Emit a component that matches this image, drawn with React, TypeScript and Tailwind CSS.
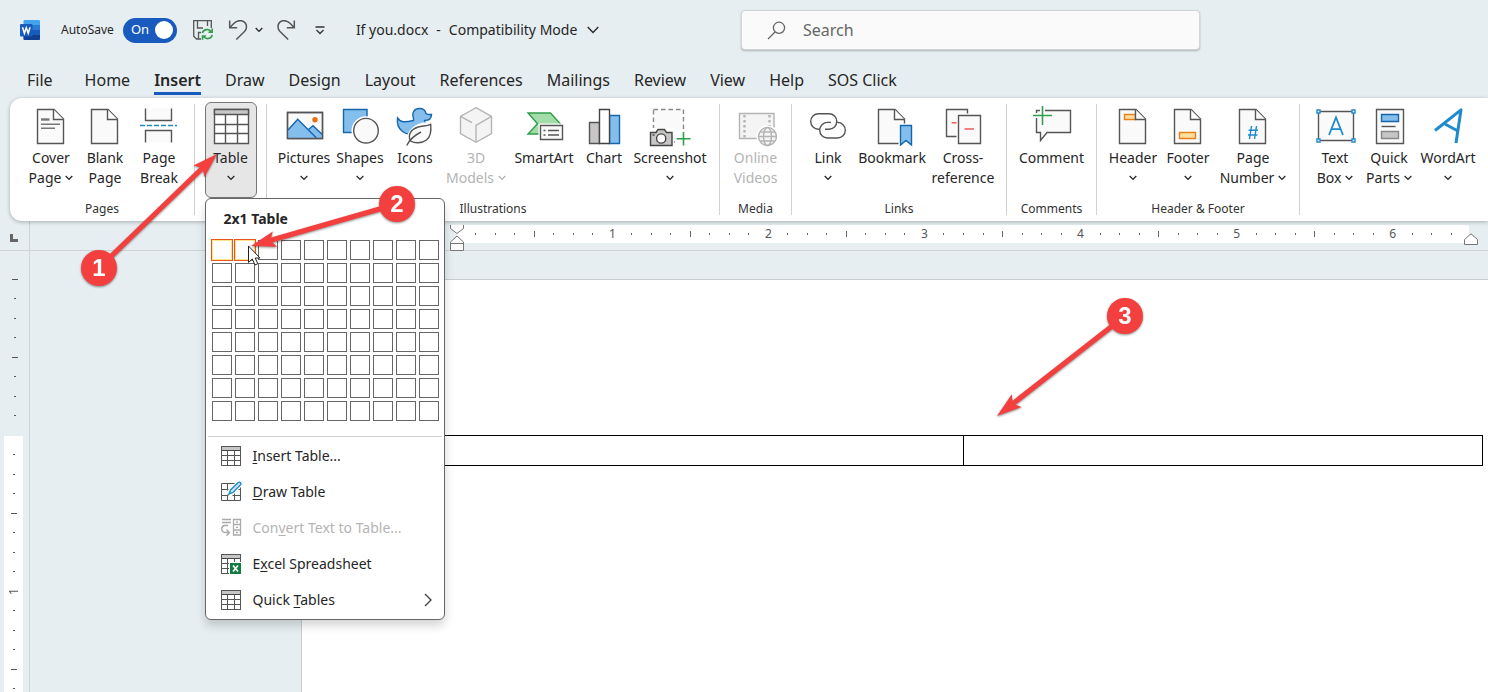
import { type ReactNode, useState } from "react";
import clsx from "clsx";

const TABS = ["File", "Home", "Insert", "Draw", "Design", "Layout", "References", "Mailings", "Review", "View", "Help", "SOS Click"];

const PAGE_PATH = "M6.5 5.5H23L32.5 15V39.5H6.5Z";
const FOLD_PATH = "M22.5 5.5V15.5H32.5";

function Chevron({ className = "" }: { className?: string }) {
  return (
    <svg viewBox="0 0 8 6" className={clsx("inline-block h-1.5 w-2 shrink-0", className)} fill="none" stroke="currentColor" strokeWidth="1.3">
      <path d="M0.7 1 4 4.4 7.3 1" />
    </svg>
  );
}

function Icon({ children }: { children: ReactNode }) {
  return (
    <svg viewBox="0 0 40 44" className="h-11 w-10 shrink-0 overflow-visible" fill="none" stroke="#555" strokeWidth="1.4">
      {children}
    </svg>
  );
}

function Sheet({ children }: { children?: ReactNode }) {
  return (
    <Icon>
      <path d={PAGE_PATH} fill="#fafafa" />
      {children}
      <path d={FOLD_PATH} fill="#fff" />
    </Icon>
  );
}

const icons = {
  cover: (
    <Sheet>
      <path d="M10 15.5h8.5" stroke="#777" strokeWidth="2.4" />
      <path d="M10 20.3h19M10 24.3h14" stroke="#777" />
    </Sheet>
  ),
  blank: <Sheet />,
  pageBreak: (
    <Icon>
      <path d="M6.5 4.5V16.5H32.5V4.5M6.5 38.5V26.5H32.5V38.5" fill="#fafafa" />
      <path d="M1 21.5H38" stroke="#1e8bcd" strokeWidth="1.6" strokeDasharray="5 2" />
    </Icon>
  ),
  table: (
    <Icon>
      <path d="M3.5 5.5H37.5V39.5H3.5Z" fill="#fff" />
      <path d="M3.5 5.5H37.5V10.5H3.5Z" fill="#c8c6c8" />
      <path d="M14.5 10.5V39.5M26.5 10.5V39.5M3.5 20.5H37.5M3.5 29.5H37.5" />
    </Icon>
  ),
  pictures: (
    <Icon>
      <path d="M3.5 8.5H38.5V34.5H3.5Z" fill="#fafafa" />
      <path d="M4 26 13.7 15.2 32.5 34H4Z" fill="#83beec" stroke="none" />
      <path d="M24.5 25.5 29 21.7 38 30.3V34H33Z" fill="#83beec" stroke="none" />
      <path d="M4 26 13.7 15.2 32.5 34M24.5 25.5 29 21.7 38 30.3" stroke="#1566ad" />
      <path d="M3.5 8.5H38.5V34.5H3.5Z" />
      <circle cx="31" cy="15.7" r="2.7" fill="#e8710c" stroke="none" />
    </Icon>
  ),
  shapes: (
    <Icon>
      <path d="M3.5 5.5H27V28.5H3.5Z" fill="#83beec" stroke="#1566ad" />
      <circle cx="26" cy="26.7" r="14.5" fill="#fff" stroke="none" />
      <circle cx="26" cy="26.7" r="12.3" fill="#fafafa" />
    </Icon>
  ),
  icons: (
    <Icon>
      <path
        d="M18.5 14.5C16.5 8 19.5 4.5 24.5 4.5C28 4.5 30.5 6.5 31 9.5C33 11 35 10.5 36.5 10.5C36.5 14.5 34 16.5 29.5 16.5C29 19 34 20 34 25C34 31 27 31 20 31C10 31 1 26 2.5 14C5.5 18.5 9.5 18.5 18.5 16.5Z"
        fill="#83beec"
        stroke="#1566ad"
      />
      <path d="M11.5 42C13 35 15 26 24 22C29 20 33 21 36 20C36.5 27 36 32 32 36C28 40 20 40 15.5 37Z" fill="#fafafa" stroke="#fff" strokeWidth="4.5" />
      <path d="M15.5 37C12 30 17 25 23 23C28 21.5 31 22.5 35.7 20.3C36.5 28 35.5 33 31.5 36C27 39.5 19.5 39.5 15.5 37Z" fill="#fafafa" />
      <path d="M11.7 41.5C14.5 36 19 31.5 26 28" />
    </Icon>
  ),
  models: (
    <Icon>
      <path d="M20 3.7 35.5 12.3V29.7L20 38.3 4.5 29.7V12.3Z" fill="#f4f4f4" stroke="#b4b4b4" />
      <path d="M4.5 12.3 16 18.7M20 38.3V21.3L35.5 12.3" stroke="#b4b4b4" />
    </Icon>
  ),
  smartArt: (
    <Icon>
      <path d="M4 9H26.5L36.5 20 28 30H4L13.5 19.7Z" fill="#a3dba9" stroke="#2f9d4a" />
      <path d="M14.5 19.5H40V37.5H14.5Z" fill="#fff" stroke="none" />
      <path d="M16.5 21.5H38.5V35.5H16.5Z" fill="#fafafa" />
      <path d="M19.5 26.5h2M24 26.5h11M19.5 31h2M24 31h11" />
    </Icon>
  ),
  chart: (
    <Icon>
      <path d="M5.5 18.5H15.5V39.5H5.5Z" fill="#c8c6c4" />
      <path d="M25.5 11.5H35.5V39.5H25.5Z" fill="#83beec" stroke="#1566ad" />
      <path d="M15.5 5.5H25.5V39.5H15.5Z" fill="#fff" stroke="#444" />
    </Icon>
  ),
  screenshot: (
    <Icon>
      <path d="M3.5 5.5H33.5V38H3.5Z" fill="#fafafa" stroke="#8a8a8a" strokeDasharray="4.5 3" />
      <path d="M-1 24H24V43H-1Z" fill="#fff" stroke="none" />
      <path d="M25 26H42V43H25Z" fill="#fff" stroke="none" />
      <path d="M.5 28.5H6L8 25.5H14.5L16.5 28.5H22V41.5H.5Z" fill="#c8c6c4" stroke="#444" />
      <circle cx="11.2" cy="34.5" r="4.6" fill="#fff" stroke="#444" />
      <path d="M2.5 31h2" stroke="#444" />
      <path d="M33.5 28V41.5M26.5 34.7H40.5" stroke="#2f9d4a" strokeWidth="1.6" />
    </Icon>
  ),
  video: (
    <Icon>
      <path d="M3.5 9.5H38V34.5H3.5Z" fill="#f4f4f4" stroke="#b4b4b4" />
      <path d="M8.5 11V34M33.5 11V22" stroke="#b4b4b4" strokeWidth="2.4" strokeDasharray="2.5 2.5" />
      <circle cx="31.5" cy="32.5" r="11" fill="#fff" stroke="none" />
      <g stroke="#b4b4b4">
        <circle cx="31.5" cy="32.5" r="9" fill="#f4f4f4" />
        <ellipse cx="31.5" cy="32.5" rx="4" ry="9" />
        <path d="M22.5 32.5H40.5M24 28H39M24 37H39" />
      </g>
    </Icon>
  ),
  link: (
    <Icon>
      <path d="M12 25.3H10.5A7.8 7.8 0 0 1 10.5 9.7H21A7.8 7.8 0 0 1 21 25.3H17" />
      <path d="M23 18.4H19.5A7.8 7.8 0 0 0 19.5 34H29.5A7.8 7.8 0 0 0 29.5 18.4H28.5" />
    </Icon>
  ),
  bookmark: (
    <Sheet>
      <path d="M26.5 19.5H42V44H26.5Z" fill="#fff" stroke="none" />
      <path d="M28.5 21.5H39.5V41L34 36.5 28.5 41Z" fill="#83beec" stroke="#1566ad" />
    </Sheet>
  ),
  cross: (
    <Icon>
      <path d="M3.5 5.5H24.5V32.5H3.5Z" fill="#fafafa" />
      <path d="M8.7 18.8H14" stroke="#f05050" />
      <path d="M13.5 9.5H39.5V41H13.5Z" fill="#fff" stroke="none" />
      <path d="M15.5 11.5H37.5V39.5H15.5Z" fill="#fafafa" />
      <path d="M21.5 25H31" stroke="#f05050" />
    </Icon>
  ),
  comment: (
    <Icon>
      <path d="M4.5 6.5H38.5V28.5H15L8.5 36.5V28.5H4.5Z" fill="#fafafa" />
      <path d="M10.5 2V21M1 11.5H20" stroke="#fff" strokeWidth="5" />
      <path d="M10.5 2V21M1 11.5H20" stroke="#2f9d4a" strokeWidth="1.6" />
    </Icon>
  ),
  header: (
    <Sheet>
      <path d="M11.5 10.5H22.5V15.5H11.5Z" fill="#ffdf9e" stroke="#e8811c" />
    </Sheet>
  ),
  footer: (
    <Sheet>
      <path d="M11.5 28.5H27.5V34.5H11.5Z" fill="#ffdf9e" stroke="#e8811c" />
    </Sheet>
  ),
  pageNumber: (
    <Sheet>
      <path d="M18.5 22 16.5 35M23.5 22 21.5 35M15.5 26.3H25M15 31H24.5" stroke="#1e8bcd" />
    </Sheet>
  ),
  textBox: (
    <Icon>
      <path d="M3.5 7.5H38.5V36.5H3.5Z" fill="#fafafa" />
      <path d="M14 31 21 13.5 28 31M16.3 25.2H25.7" stroke="#1e8bcd" strokeWidth="1.8" />
      <path d="M2 6h3v3h-3zM37 6h3v3h-3zM2 35h3v3h-3zM37 35h3v3h-3z" fill="#fff" stroke="#1e8bcd" />
    </Icon>
  ),
  quickParts: (
    <Icon>
      <path d="M7.5 5.5H34.5V39.5H7.5Z" fill="#fafafa" />
      <path d="M12.5 10.5H29.5V17.5H12.5Z" fill="#83beec" stroke="#1566ad" />
      <path d="M12.5 22.5H26.5" />
      <path d="M12.5 27.5H29.5V34.5H12.5Z" fill="#c8c6c4" stroke="#888" />
    </Icon>
  ),
  wordArt: (
    <Icon>
      <path d="M7 26.5 33 5.8 28 39M16 19.5 29 26.5" stroke="#1e8bcd" strokeWidth="3" strokeLinejoin="round" />
    </Icon>
  ),
};

interface Tool {
  icon: keyof typeof icons;
  lines: string[];
  width: string;
  menu?: boolean;
  disabled?: boolean;
}

const PAGES: Tool[] = [
  { icon: "cover", lines: ["Cover", "Page"], width: "w-[54px]", menu: true },
  { icon: "blank", lines: ["Blank", "Page"], width: "w-[54px]" },
  { icon: "pageBreak", lines: ["Page", "Break"], width: "w-[54px]" },
];

const GROUPS: { name: string; width: string; tools: Tool[] }[] = [
  {
    name: "Illustrations",
    width: "w-[453px]",
    tools: [
      { icon: "pictures", lines: ["Pictures"], width: "w-14", menu: true },
      { icon: "shapes", lines: ["Shapes"], width: "w-14", menu: true },
      { icon: "icons", lines: ["Icons"], width: "w-[54px]" },
      { icon: "models", lines: ["3D", "Models"], width: "w-[68px]", menu: true, disabled: true },
      { icon: "smartArt", lines: ["SmartArt"], width: "w-[68px]" },
      { icon: "chart", lines: ["Chart"], width: "w-[52px]" },
      { icon: "screenshot", lines: ["Screenshot"], width: "w-20", menu: true },
    ],
  },
  { name: "Media", width: "w-[72px]", tools: [{ icon: "video", lines: ["Online", "Videos"], width: "w-16", disabled: true }] },
  {
    name: "Links",
    width: "w-[215px]",
    tools: [
      { icon: "link", lines: ["Link"], width: "w-14", menu: true },
      { icon: "bookmark", lines: ["Bookmark"], width: "w-[72px]" },
      { icon: "cross", lines: ["Cross-", "reference"], width: "w-[70px]" },
    ],
  },
  { name: "Comments", width: "w-[90px]", tools: [{ icon: "comment", lines: ["Comment"], width: "w-[72px]" }] },
  {
    name: "Header & Footer",
    width: "w-[203px]",
    tools: [
      { icon: "header", lines: ["Header"], width: "w-14", menu: true },
      { icon: "footer", lines: ["Footer"], width: "w-[54px]", menu: true },
      { icon: "pageNumber", lines: ["Page", "Number"], width: "w-[76px]", menu: true },
    ],
  },
];

const TEXT_TOOLS: Tool[] = [
  { icon: "textBox", lines: ["Text", "Box"], width: "w-[54px]", menu: true },
  { icon: "quickParts", lines: ["Quick", "Parts"], width: "w-[54px]", menu: true },
  { icon: "wordArt", lines: ["WordArt"], width: "w-16", menu: true },
];

function ToolButton({ tool }: { tool: Tool }) {
  const [first, second] = tool.lines;
  return (
    <button
      type="button"
      disabled={tool.disabled}
      className={clsx("flex shrink-0 flex-col items-center pt-1.5 text-sm leading-5 whitespace-nowrap", tool.width, tool.disabled ? "text-[#b4b4b4]" : "text-[#262626]")}
    >
      {icons[tool.icon]}
      <span>{first}</span>
      <span className="flex h-5 items-center gap-1">
        {second}
        {tool.menu ? <Chevron /> : null}
      </span>
    </button>
  );
}

function Group({ name, width, children }: { name?: string; width: string; children: ReactNode }) {
  return (
    <div className={clsx("flex shrink-0 py-1.5", width)}>
      <div className="-my-1.5 flex flex-1 flex-col justify-between pb-1">
        <div className="flex justify-center">{children}</div>
        <div className="text-center text-xs leading-4 text-[#333]">{name}</div>
      </div>
      <div className="w-px bg-[#d0d0d0]" />
    </div>
  );
}

function GridGlyph({ children }: { children?: ReactNode }) {
  return (
    <svg viewBox="0 0 20 20" className="size-5 shrink-0 overflow-visible" fill="none" stroke="#555">
      <path d="M.5 .5H19.5V19.5H.5Z" fill="#fff" />
      <path d="M.5 .5H19.5V4.5H.5Z" fill="#c8c6c4" stroke="#444" />
      <path d="M6.5 4.5V19.5M13.5 4.5V19.5M.5 9.5H19.5M.5 14.5H19.5" />
      <path d="M.5 .5H19.5V19.5H.5Z" />
      {children}
    </svg>
  );
}

const MENU_ITEMS: { before: string; key: string; after: string; icon: ReactNode; disabled?: boolean; submenu?: boolean }[] = [
  { before: "", key: "I", after: "nsert Table...", icon: <GridGlyph /> },
  {
    before: "",
    key: "D",
    after: "raw Table",
    icon: (
      <svg viewBox="0 0 20 20" className="size-5 shrink-0 overflow-visible" fill="none" stroke="#555">
        <path d="M.5 1.5H19.5V18.5H.5ZM6.5 1.5V18.5M13.5 1.5V18.5M.5 7.5H19.5M.5 13.5H19.5" fill="#fafafa" />
        <path d="M7 13 19 1" stroke="#fff" strokeWidth="7" />
        <path d="M8 12 9.5 8 17 .8Q18.5 -.5 19.5 .8T19.3 3L12 10.5Z" fill="#cfe6f7" stroke="#1e8bcd" strokeWidth="1.4" />
      </svg>
    ),
  },
  {
    before: "Con",
    key: "v",
    after: "ert Text to Table...",
    disabled: true,
    icon: (
      <svg viewBox="0 0 20 20" className="size-5 shrink-0 overflow-visible" fill="none" stroke="#aaa" strokeWidth="1.3">
        <path d="M1 1.5H10M1 4.5H10M7 7.5H3.5Q.7 8 .7 11T4 14.5H8M5.5 11.5 8.5 14.5 5.5 17.8" />
        <path d="M12.5 1.5H19.5V17H12.5ZM12.5 6.5H19.5M12.5 12H19.5M15 4H17M15 9.3H17M15 14.5H17" />
      </svg>
    ),
  },
  {
    before: "E",
    key: "x",
    after: "cel Spreadsheet",
    icon: (
      <GridGlyph>
        <path d="M8 8H21V21H8Z" fill="#fff" stroke="none" />
        <path d="M9 9H20V20H9Z" fill="#107c41" stroke="none" />
        <path d="M12 11.5 17 17.5M17 11.5 12 17.5" stroke="#fff" strokeWidth="1.7" />
      </GridGlyph>
    ),
  },
  { before: "Quick ", key: "T", after: "ables", icon: <GridGlyph />, submenu: true },
];

const GRID_CELLS = Array.from({ length: 80 }, (_, i) => ({ col: i % 10, row: Math.floor(i / 10) }));

function TableMenu() {
  return (
    <div role="menu" className="absolute top-full left-0 z-20 w-60 rounded-md border border-[#666] bg-white pb-px shadow-[0_6px_10px_rgba(0,0,0,0.16)]">
      <div className="pt-2.5 pl-[18px] text-sm leading-5 font-bold text-[#262626]">2x1 Table</div>
      <div className="mt-[11px] grid grid-cols-[repeat(10,20px)] gap-[3px] pl-1.5">
        {GRID_CELLS.map(({ col, row }) => {
          const picked = row === 0 && col < 2;
          return (
            <button
              key={`${col}-${row}`}
              type="button"
              aria-label={`${col + 1}x${row + 1} Table`}
              className={clsx("size-5 border bg-white", picked ? "border-[#ffe28a] outline outline-[#ea5518]" : "border-[#666]")}
            />
          );
        })}
      </div>
      <div className="mx-0.5 mt-[15px] mb-px border-t border-[#d0d0d0]" />
      {MENU_ITEMS.map((item) => (
        <button
          key={item.key}
          type="button"
          role="menuitem"
          disabled={item.disabled}
          className={clsx("flex h-9 w-full items-center gap-3 pr-3 pl-[15px] text-sm", item.disabled ? "text-[#b4b4b4]" : "text-[#262626]")}
        >
          {item.icon}
          <span className="flex-1 text-left whitespace-pre">
            {item.before}
            <u className="underline-offset-2">{item.key}</u>
            {item.after}
          </span>
          {item.submenu ? (
            <svg viewBox="0 0 8 14" className="h-3.5 w-2" fill="none" stroke="#444" strokeWidth="1.4">
              <path d="M1 1 7 7 1 13" />
            </svg>
          ) : null}
        </button>
      ))}
    </div>
  );
}

function TitleBar() {
  const [autoSave, setAutoSave] = useState(true);
  return (
    <header className="flex h-15 items-center pl-5 text-[#262626]">
      <svg viewBox="0 0 20 20" className="size-5 shrink-0">
        <rect x="3.5" width="16.5" height="20" rx="1.2" fill="#41a5ee" />
        <path d="M3.5 5H20V10H3.5Z" fill="#2b7cd3" />
        <path d="M3.5 10H20V15H3.5Z" fill="#185abd" />
        <path d="M3.5 15H20V19Q20 20 19 20H4.5Q3.5 20 3.5 19Z" fill="#103f91" />
        <rect y="4" width="12.5" height="12.5" rx="1" fill="#185abd" />
        <path d="M2.5 7.3 4.4 13.3 6.3 7.8 8.2 13.3 10.1 7.3" fill="none" stroke="#fff" strokeWidth="1.5" />
      </svg>
      <label className="ml-[21px] flex shrink-0 items-center gap-[9px] text-xs">
        AutoSave
        <input type="checkbox" className="peer sr-only" checked={autoSave} onChange={(event) => setAutoSave(event.target.checked)} />
        <span className="flex h-[25px] w-[54px] items-center justify-between rounded-full bg-[#185abd] pr-1 pl-2 text-[13px] text-white">
          {autoSave ? "On" : "Off"}
          <span className="size-[18px] rounded-full bg-white" />
        </span>
      </label>
      <button type="button" aria-label="Save" className="ml-4">
        <svg viewBox="0 0 20 20" className="size-5 overflow-visible" fill="none" stroke="#555" strokeWidth="1.3">
          <path d="M8 19H3.5L.7 16.2V.7H18.3V8M4.5 .7V8H10M14.5 .7V6M5.5 19V12.5H8" />
          <path d="M9.3 13A5 5 0 0 1 18 11.5M19.2 8.5V12.3H15.5M19.3 15A5 5 0 0 1 10.7 16.8M9.5 19.8V16H13" stroke="#2f9d4a" strokeWidth="1.6" />
        </svg>
      </button>
      <button type="button" aria-label="Undo" className="ml-[15px]">
        <svg viewBox="0 0 20 20" className="size-5" fill="none" stroke="#555" strokeWidth="1.5">
          <path d="M1.7 .5V7.7H9.2M1.7 7.7 6 3.3Q9.5 0 13.5 .8Q18.7 2.5 18.5 7Q18.3 9.8 16.5 11.5L8.3 19.5" />
        </svg>
      </button>
      <button type="button" aria-label="Undo history" className="ml-[7px] flex">
        <Chevron />
      </button>
      <button type="button" aria-label="Redo" className="ml-3.5">
        <svg viewBox="0 0 20 20" className="size-5" fill="none" stroke="#555" strokeWidth="1.5">
          <path d="M17.3 .5V7.7H9.8M17.3 7.7 13 3.3Q9.5 0 5.5 .8Q.8 2.5 1 7Q1.2 9.8 3 11.5L11.2 19.5" />
        </svg>
      </button>
      <button type="button" aria-label="Customize toolbar" className="ml-[18px]">
        <svg viewBox="0 0 10 9" className="h-[9px] w-2.5" fill="none" stroke="#333" strokeWidth="1.3">
          <path d="M.5 1H9.5M1.5 4 5 7.5 8.5 4" />
        </svg>
      </button>
      <button type="button" className="ml-[31px] flex items-center gap-2 text-sm whitespace-nowrap">
        <span>If you.docx</span>
        <span>-</span>
        <span>Compatibility Mode</span>
        <svg viewBox="0 0 12 8" className="ml-0.5 h-2 w-3" fill="none" stroke="currentColor" strokeWidth="1.3">
          <path d="M.7 1 6 6.5 11.3 1" />
        </svg>
      </button>
      <label className="mr-72 ml-auto flex h-10 w-[459px] items-center gap-[17px] rounded border border-[#d3d6d8] bg-[#fafafa] pl-[25px] shadow-[0_1px_2px_rgba(0,0,0,0.25)]">
        <svg viewBox="0 0 19 19" className="size-[19px] shrink-0" fill="none" stroke="#666" strokeWidth="1.3">
          <circle cx="12" cy="6.8" r="5.6" />
          <path d="M8 11 1 18" />
        </svg>
        <input type="text" aria-label="Search" placeholder="Search" className="min-w-0 flex-1 text-base outline-none placeholder:text-[#666]" />
      </label>
    </header>
  );
}

function Ribbon() {
  return (
    <div className="relative z-10 ml-2.5 flex h-[123px] rounded-l-xl bg-white shadow-[0_1px_4px_rgba(0,0,0,0.28)]">
      <Group name="Pages" width="w-[185px]">
        <div className="flex pl-1.5">
          {PAGES.map((tool) => (
            <ToolButton key={tool.icon} tool={tool} />
          ))}
        </div>
      </Group>
      <Group width="w-[72px]">
        <div className="relative mt-1">
          <button type="button" aria-expanded="true" className="flex h-24 w-[52px] flex-col items-center rounded-md border border-[#777] bg-[#e6e6e6] pt-px text-sm leading-5 text-[#262626]">
            {icons.table}
            <span>Table</span>
            <span className="flex h-5 items-center">
              <Chevron />
            </span>
          </button>
          <TableMenu />
        </div>
      </Group>
      {GROUPS.map((group) => (
        <Group key={group.name} name={group.name} width={group.width}>
          {group.tools.map((tool) => (
            <ToolButton key={tool.icon} tool={tool} />
          ))}
        </Group>
      ))}
      <div className="flex pl-2">
        {TEXT_TOOLS.map((tool) => (
          <ToolButton key={tool.icon} tool={tool} />
        ))}
      </div>
    </div>
  );
}

function Ruler() {
  return (
    <div className="flex h-[30px] border-b border-[#cdd3d6]">
      <div className="flex w-[30px] shrink-0 items-end border-r border-[#cdd3d6] pb-2 pl-2.5">
        <div className="size-2 border-b-3 border-l-3 border-[#666]" />
      </div>
      <div className="mt-1 ml-[427px] flex h-[18px] w-[1012px] shrink-0 bg-white">
        <svg viewBox="0 0 14 26" className="-ml-[7px] h-[26px] w-3.5 shrink-0" fill="#fff" stroke="#777">
          <path d="M.5 -.5V3.5L7 8.5 13.5 3.5V-.5ZM.5 25.5V17L7 11 13.5 17V25.5ZM.5 18.5H13.5" />
        </svg>
        <div className="ml-0.5 grid w-[995px] shrink-0 grid-cols-[repeat(51,minmax(0,1fr))] items-center justify-items-center text-xs leading-4 text-[#555]">
          {Array.from({ length: 51 }, (_, i) => i + 1).map((tick) =>
            tick % 8 === 0 ? <span key={tick}>{tick / 8}</span> : <span key={tick} className={clsx("w-px bg-[#666]", tick % 4 === 0 ? "h-1.5" : "h-0.5")} />
          )}
        </div>
        <svg viewBox="0 0 14 12" className="mt-2 ml-[3px] h-3 w-3.5 shrink-0" fill="#fff" stroke="#777">
          <path d="M.5 11.5V6.5L7 .8 13.5 6.5V11.5Z" />
        </svg>
      </div>
    </div>
  );
}

function RulerInch({ label }: { label?: string }) {
  return (
    <div className="grid h-[156px] shrink-0 grid-rows-8 items-center justify-items-center text-xs text-[#555]">
      {Array.from({ length: 8 }, (_, i) => i + 1).map((tick) =>
        tick === 8 && label ? (
          <span key={tick} className="rotate-180 leading-4 [writing-mode:vertical-rl]">
            {label}
          </span>
        ) : (
          <span key={tick} className={clsx("h-px bg-[#555]", tick % 4 === 0 ? "w-1.5" : "w-0.5")} />
        )
      )}
    </div>
  );
}

function SideRuler() {
  return (
    <div className="relative w-[30px] shrink-0 overflow-hidden border-r border-[#cdd3d6]">
      <div className="absolute inset-y-0 left-1 flex w-[21px] flex-col">
        <div className="flex h-[185px] shrink-0 flex-col justify-between pt-7 pb-5">
          {Array.from({ length: 8 }, (_, i) => (
            <span key={i} className={clsx("mx-auto h-px bg-[#555]", i % 4 === 0 ? "w-1.5" : "w-0.5")} />
          ))}
        </div>
        <div className="w-[19px] flex-1 overflow-hidden bg-white pt-[9px]">
          <RulerInch label="1" />
          <RulerInch />
        </div>
      </div>
    </div>
  );
}

function Callout({ label, from, to }: { label: string; from: [number, number]; to: [number, number] }) {
  const length = Math.hypot(to[0] - from[0], to[1] - from[1]);
  const ux = (to[0] - from[0]) / length;
  const uy = (to[1] - from[1]) / length;
  const at = (back: number, side: number) => `${to[0] - ux * back - uy * side},${to[1] - uy * back + ux * side}`;
  return (
    <g fill="#f43f3f" className="drop-shadow-[0_1px_1px_rgba(0,0,0,0.45)]">
      <line x1={from[0]} y1={from[1]} x2={to[0] - ux * 18} y2={to[1] - uy * 18} stroke="#f43f3f" strokeWidth="5" />
      <polygon points={`${at(0, 0)} ${at(25, 8)} ${at(20, 0)} ${at(25, -8)}`} />
      <circle cx={from[0]} cy={from[1]} r="18" />
      <text x={from[0]} y={from[1] + 8} textAnchor="middle" className="fill-white font-['Liberation_Sans',sans-serif] text-2xl font-bold">
        {label}
      </text>
    </g>
  );
}

export default function App() {
  return (
    <div className="relative flex min-h-screen flex-col overflow-hidden bg-[#e6eef1] font-['Noto_Sans',sans-serif]">
      <TitleBar />
      <nav className="flex h-[38px] items-start gap-6 pt-2 pl-[27px] text-base leading-6 whitespace-nowrap text-[#262626]">
        {TABS.map((tab) => (
          <button
            key={tab}
            type="button"
            className={clsx("border-b-3", tab === "Insert" ? "border-[#185abd] font-semibold" : "border-transparent", tab === "File" && "mr-2")}
          >
            {tab}
          </button>
        ))}
      </nav>
      <Ribbon />
      <Ruler />
      <main className="flex flex-1">
        <SideRuler />
        <div className="mt-7 ml-[271px] flex-1 border-t border-l border-[#c6cccf] bg-white pt-[155px] pr-[5px] pl-[142px]">
          <table className="h-[31px] w-full table-fixed border-collapse">
            <tbody>
              <tr>
                <td className="border border-black" />
                <td className="border border-black" />
              </tr>
            </tbody>
          </table>
        </div>
      </main>

      <svg className="pointer-events-none absolute inset-0 z-30 h-full w-full">
        <Callout label="1" from={[99, 268]} to={[217, 154]} />
        <Callout label="2" from={[397, 204]} to={[251, 246]} />
        <Callout label="3" from={[1125, 316]} to={[997, 416]} />
        <path d="M248.5 246V262.5L252.3 259 255 265 257.8 263.7 255.2 258H260Z" fill="#fff" stroke="#222" />
      </svg>
    </div>
  );
}
